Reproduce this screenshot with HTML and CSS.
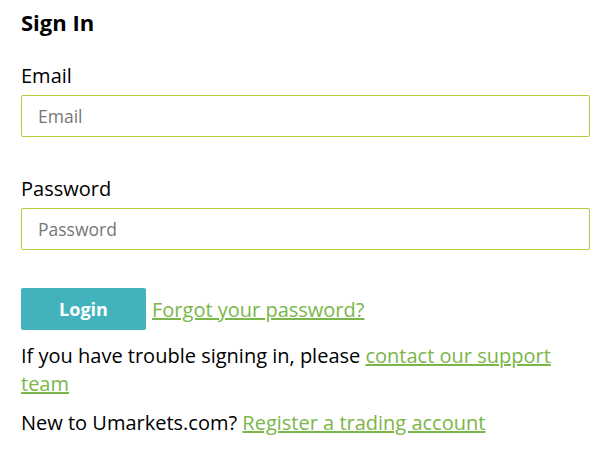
FILE: index.html
```html
<!DOCTYPE html>
<html lang="en">
<head>
    <meta charset="UTF-8">
    <meta name="viewport" content="width=device-width, initial-scale=1.0">
    <title>Sign In</title>
    <link rel="stylesheet" href="styles.css">
</head>
<body>
    <div class="signin">
        <h2 class="signin-title">Sign In</h2>
        <form class="signin-form">
            <div class="field">
                <label for="email">Email</label>
                <input type="text" id="email" placeholder="Email">
            </div>
            <div class="field">
                <label for="password">Password</label>
                <input type="password" id="password" placeholder="Password">
            </div>
            <div class="actions">
                <button type="button" class="login-btn">Login</button>
                <a href="#">Forgot your password?</a>
            </div>
        </form>
        <p class="note">If you have trouble signing in, please <a href="#">contact our support team</a></p>
        <p class="note">New to Umarkets.com? <a href="#">Register a trading account</a></p>
    </div>
</body>
</html>
```

FILE: styles.css
```css
body {
    margin: 0;
    font-family: "Open Sans", Arial, sans-serif;
    color: #000;
    background-color: #fff;
}
.signin {
    padding: 7px 21px 0 21px;
}
.signin-title {
    margin: 0 0 25px 0;
    font-size: 22px;
    font-weight: 700;
    line-height: 30px;
}
.field {
    display: flex;
    flex-direction: column;
    margin-bottom: 38px;
}
.field label {
    font-size: 20px;
    line-height: 28px;
    margin-bottom: 5px;
}
.field input {
    height: 42px;
    box-sizing: border-box;
    width: 569px;
    padding: 0 16px;
    border: 1px solid #b5cc3a;
    border-radius: 2px;
    font-family: inherit;
    font-size: 17.5px;
    color: #333;
    outline: none;
}
.field input::placeholder {
    color: #777;
}
.actions {
    display: flex;
    align-items: center;
    gap: 6px;
}
.login-btn {
    width: 125px;
    height: 42px;
    border: none;
    border-radius: 2px;
    background-color: #42b3bd;
    color: #fff;
    font-family: inherit;
    font-size: 18px;
    font-weight: 700;
    cursor: pointer;
}
a {
    color: #7ab648;
    font-size: 20px;
}
.note {
    margin: 12px 0 0 0;
    font-size: 20px;
    line-height: 28px;
}
.note + .note {
    margin-top: 11px;
}
```
